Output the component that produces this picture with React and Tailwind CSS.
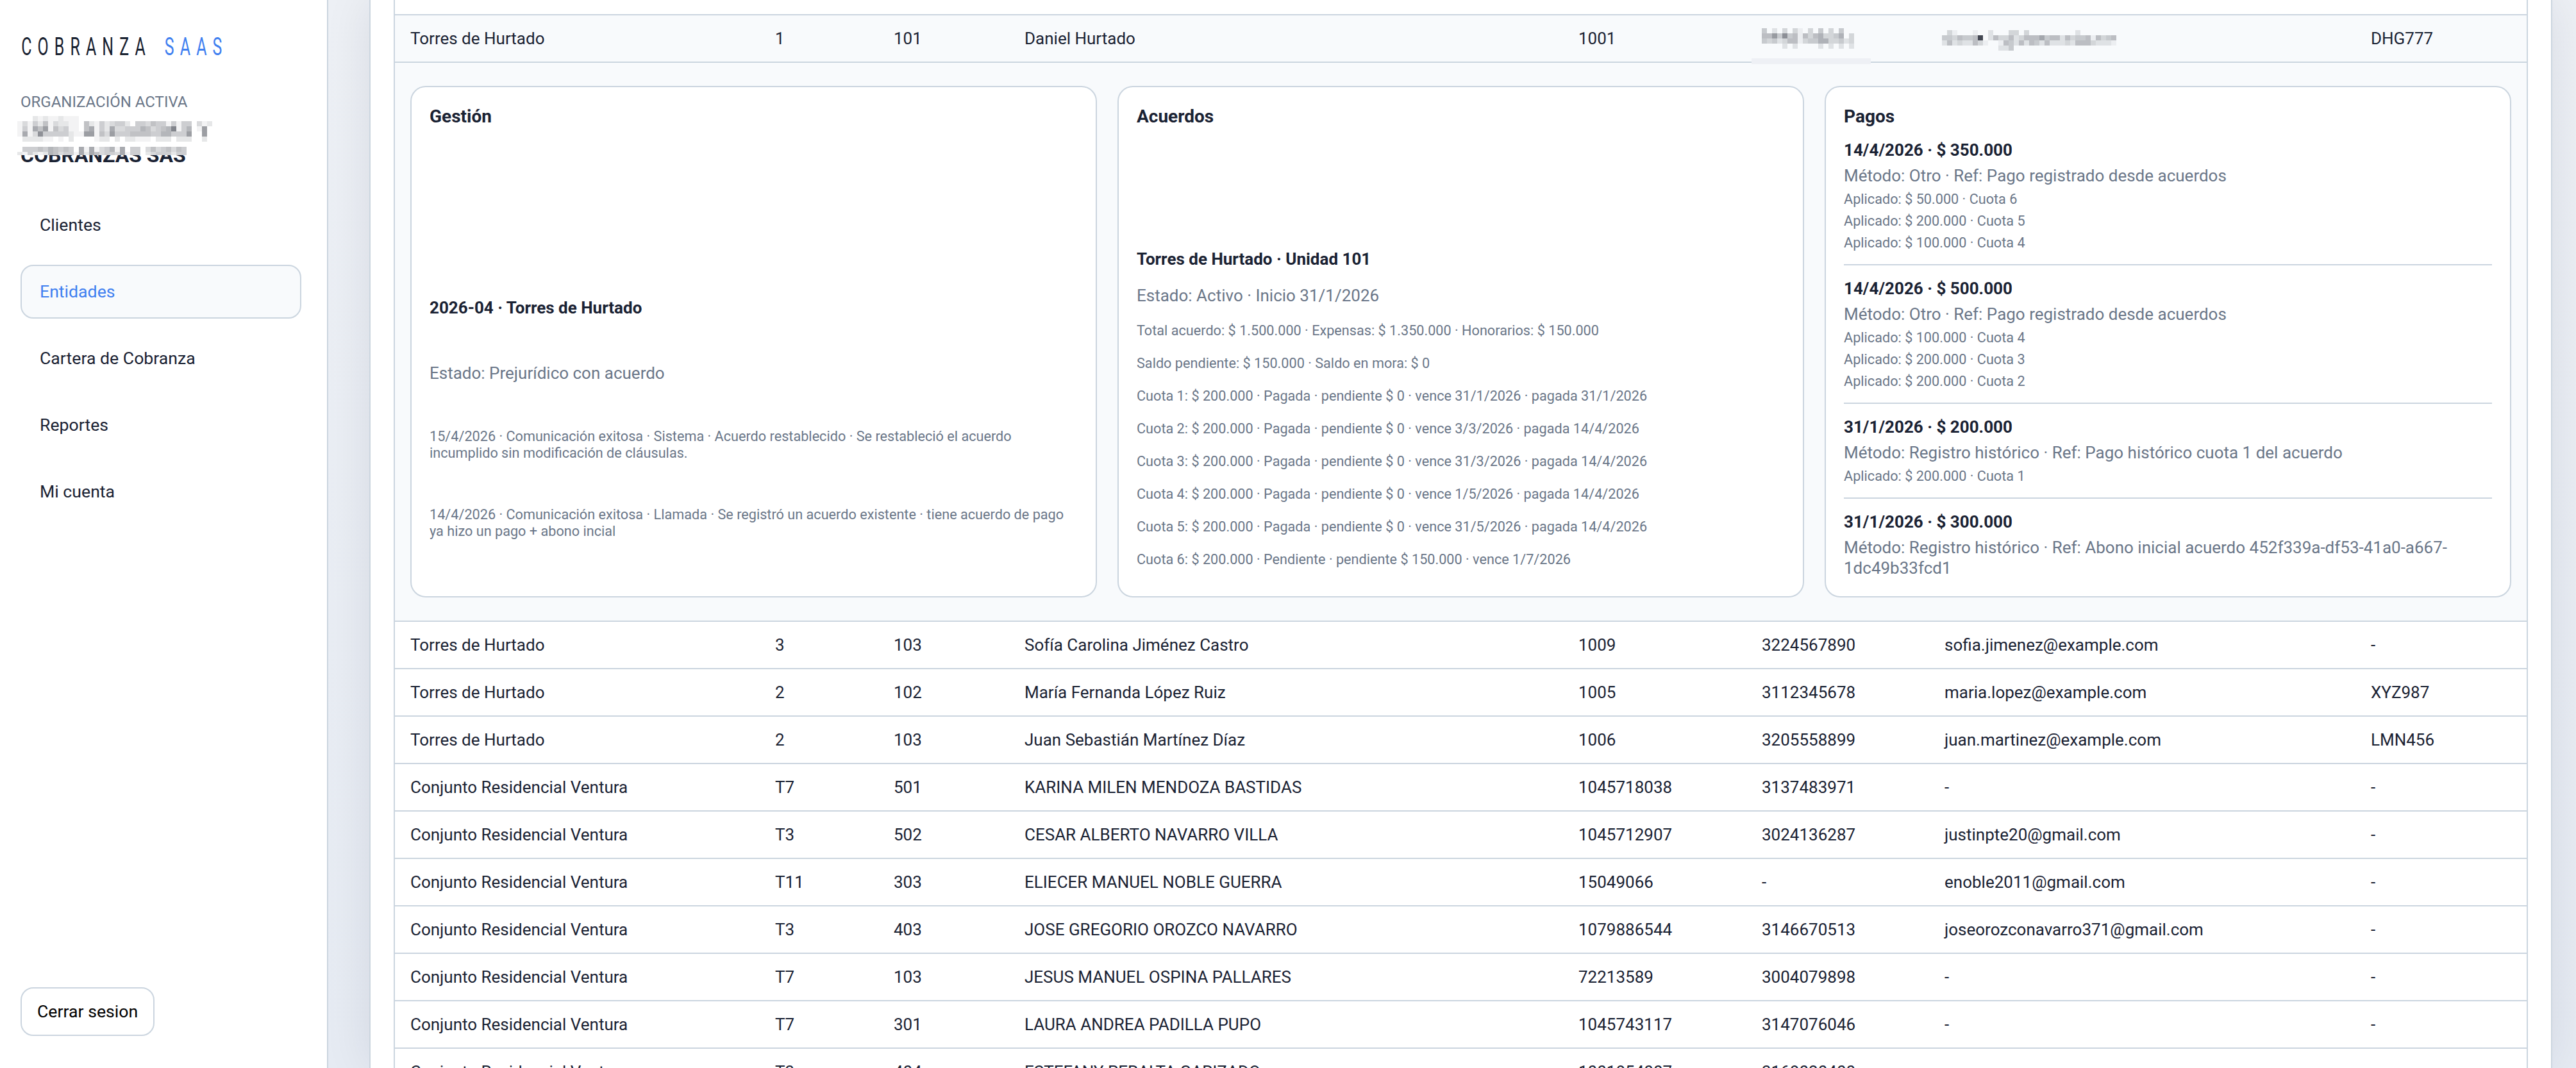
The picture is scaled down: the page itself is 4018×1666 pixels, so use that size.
const navItems = ["Clientes", "Entidades", "Cartera de Cobranza", "Reportes", "Mi cuenta"];

const cuotas = [
  "Cuota 1: $ 200.000 · Pagada · pendiente $ 0 · vence 31/1/2026 · pagada 31/1/2026",
  "Cuota 2: $ 200.000 · Pagada · pendiente $ 0 · vence 3/3/2026 · pagada 14/4/2026",
  "Cuota 3: $ 200.000 · Pagada · pendiente $ 0 · vence 31/3/2026 · pagada 14/4/2026",
  "Cuota 4: $ 200.000 · Pagada · pendiente $ 0 · vence 1/5/2026 · pagada 14/4/2026",
  "Cuota 5: $ 200.000 · Pagada · pendiente $ 0 · vence 31/5/2026 · pagada 14/4/2026",
  "Cuota 6: $ 200.000 · Pendiente · pendiente $ 150.000 · vence 1/7/2026",
];

const pagos = [
  {
    title: "14/4/2026 · $ 350.000",
    detail: "Método: Otro · Ref: Pago registrado desde acuerdos",
    aplicado: ["$ 50.000 · Cuota 6", "$ 200.000 · Cuota 5", "$ 100.000 · Cuota 4"],
  },
  {
    title: "14/4/2026 · $ 500.000",
    detail: "Método: Otro · Ref: Pago registrado desde acuerdos",
    aplicado: ["$ 100.000 · Cuota 4", "$ 200.000 · Cuota 3", "$ 200.000 · Cuota 2"],
  },
  {
    title: "31/1/2026 · $ 200.000",
    detail: "Método: Registro histórico · Ref: Pago histórico cuota 1 del acuerdo",
    aplicado: ["$ 200.000 · Cuota 1"],
  },
  {
    title: "31/1/2026 · $ 300.000",
    detail: "Método: Registro histórico · Ref: Abono inicial acuerdo 452f339a-df53-41a0-a667-1dc49b33fcd1",
    aplicado: [],
  },
];

const rows = [
  ["Torres de Hurtado", "3", "103", "Sofía Carolina Jiménez Castro", "1009", "3224567890", "sofia.jimenez@example.com", "-"],
  ["Torres de Hurtado", "2", "102", "María Fernanda López Ruiz", "1005", "3112345678", "maria.lopez@example.com", "XYZ987"],
  ["Torres de Hurtado", "2", "103", "Juan Sebastián Martínez Díaz", "1006", "3205558899", "juan.martinez@example.com", "LMN456"],
  ["Conjunto Residencial Ventura", "T7", "501", "KARINA MILEN MENDOZA BASTIDAS", "1045718038", "3137483971", "-", "-"],
  ["Conjunto Residencial Ventura", "T3", "502", "CESAR ALBERTO NAVARRO VILLA", "1045712907", "3024136287", "justinpte20@gmail.com", "-"],
  ["Conjunto Residencial Ventura", "T11", "303", "ELIECER MANUEL NOBLE GUERRA", "15049066", "-", "enoble2011@gmail.com", "-"],
  ["Conjunto Residencial Ventura", "T3", "403", "JOSE GREGORIO OROZCO NAVARRO", "1079886544", "3146670513", "joseorozconavarro371@gmail.com", "-"],
  ["Conjunto Residencial Ventura", "T7", "103", "JESUS MANUEL OSPINA PALLARES", "72213589", "3004079898", "-", "-"],
  ["Conjunto Residencial Ventura", "T7", "301", "LAURA ANDREA PADILLA PUPO", "1045743117", "3147076046", "-", "-"],
  ["Conjunto Residencial Ventura", "T3", "404", "ESTEFANY PERALTA GARIZADO", "1001854007", "3168020400", "-", "-"],
];

// Each hex digit is the darkness of one 8px block
const orgTop = [
  "00021211211100000000000000000000000000",
  "13142513221105214234420443544141440312",
  "141758153411057142733444653456a1460180",
  "17139444442118815384445555446644480080",
  "02222110102000012202022111022202220020",
];
const orgBottom = ["044454654540717134617044035345354", "214212653441727534437144023444244"];
const phoneMask = ["402030310304030400", "558494515356334603", "434235513446633423", "000020200002020202"];
const emailMask = [
  "0310001002000330300000000020000000",
  "4435445f02533523555745525344515345",
  "2523225310015425254252223255532221",
  "0000000000022400000000000000000000",
];

const Mosaic = ({ data, className }) => (
  <svg
    className={className}
    width={data[0].length * 8}
    height={data.length * 8}
    shapeRendering="crispEdges"
    aria-hidden="true"
  >
    {data.map((line, y) =>
      [...line].map((c, x) =>
        c === "0" ? null : (
          <rect
            key={`${x}-${y}`}
            x={x * 8}
            y={y * 8}
            width="8"
            height="8"
            fill="#1f2430"
            opacity={parseInt(c, 16) / 18}
          />
        )
      )
    )}
  </svg>
);

const Sidebar = () => (
  <aside className="flex w-[512px] shrink-0 flex-col border-r-2 border-[#cbd5df] bg-white pt-[49px] pr-10 pb-[50px] pl-8">
    <div className="h-12 origin-left scale-x-[0.64] pl-[2px] text-[39px] leading-[48px] tracking-[14.2px] whitespace-nowrap text-[#17202f]">
      COBRANZA <span className="ml-[9px] text-[#3f7ff0]">SAAS</span>
    </div>

    <div className="mt-12 text-2xl leading-7 text-[#6a7688]">ORGANIZACIÓN ACTIVA</div>
    <div className="relative mt-3 h-[76px] pt-[38px] text-[32px] leading-[38px] font-bold text-[#1a2233]">
      COBRANZAS SAS
      <Mosaic data={orgTop} className="absolute top-[-4px] -left-[5px]" />
      <div className="absolute top-[42px] -left-[5px] h-[15px] w-[270px] overflow-hidden bg-white">
        <Mosaic data={orgBottom} className="mt-[2px]" />
      </div>
    </div>

    <nav className="mt-12 flex flex-col gap-5">
      {navItems.map((item) => (
        <a
          key={item}
          className={
            item === "Entidades"
              ? "flex h-[84px] items-center rounded-[20px] border-2 border-[#cbd5df] bg-[#f8fafc] pl-7 text-[26.67px] text-[#3f7ff0]"
              : "flex h-[84px] items-center rounded-[20px] border-2 border-transparent pl-7 text-[26.67px] text-[#1a2233]"
          }
        >
          {item}
        </a>
      ))}
    </nav>

    <button className="mt-auto h-[76px] self-start rounded-[20px] border-2 border-[#cbd5df] bg-white px-6 text-[26.67px] text-black">
      Cerrar sesion
    </button>
  </aside>
);

const Row = ({ cells, className = "" }) => (
  <div
    className={`grid h-[74px] shrink-0 grid-cols-[569px_185px_204px_864px_286px_285px_665px_1fr] items-center border-b-2 border-[#cbd5df] pl-6 leading-8 ${className}`}
  >
    {cells.map((cell, i) => (
      <div key={i}>{cell}</div>
    ))}
  </div>
);

const Card = ({ title, children }) => (
  <section className="rounded-3xl border-2 border-[#cbd5df] bg-white p-7">
    <h4 className="pt-px text-[28px] leading-[33px] font-bold">{title}</h4>
    {children}
  </section>
);

const Detail = () => (
  <div className="grid h-[872px] shrink-0 grid-cols-3 gap-8 border-b-2 border-[#cbd5df] bg-[#f8fafc] px-6 py-9">
    <Card title="Gestión">
      <div className="mt-[266px] h-[102px] leading-8 font-bold">2026-04 · Torres de Hurtado</div>
      <div className="h-[102px] leading-8 text-[#6a7688]">Estado: Prejurídico con acuerdo</div>
      <div className="h-[122px] text-[21.67px] leading-[26px] text-[#6a7688]">
        15/4/2026 · Comunicación exitosa · Sistema · Acuerdo restablecido · Se restableció el acuerdo
        <br />
        incumplido sin modificación de cláusulas.
      </div>
      <div className="text-[21.67px] leading-[26px] text-[#6a7688]">
        14/4/2026 · Comunicación exitosa · Llamada · Se registró un acuerdo existente · tiene acuerdo de pago
        <br />
        ya hizo un pago + abono incial
      </div>
    </Card>

    <Card title="Acuerdos">
      <div className="mt-[190px] h-[57px] leading-8 font-bold">Torres de Hurtado · Unidad 101</div>
      <div className="h-[58px] leading-8 text-[#6a7688]">Estado: Activo · Inicio 31/1/2026</div>
      <div className="text-[21.67px] leading-[26px] text-[#6a7688]">
        <div className="h-[51px]">Total acuerdo: $ 1.500.000 · Expensas: $ 1.350.000 · Honorarios: $ 150.000</div>
        <div className="h-[51px]">Saldo pendiente: $ 150.000 · Saldo en mora: $ 0</div>
        {cuotas.map((c, i) => (
          <div key={c} className={i < cuotas.length - 1 ? "h-[51px]" : ""}>
            {c}
          </div>
        ))}
      </div>
    </Card>

    <Card title="Pagos">
      <div className="divide-y-2 divide-[#cbd5df]">
        {pagos.map((p) => (
          <div key={p.title} className="flex flex-col gap-2 py-5 last:pb-0">
            <div className="leading-8 font-bold">{p.title}</div>
            <div className="leading-8 text-[#6a7688]">{p.detail}</div>
            {p.aplicado.map((a) => (
              <div key={a} className="text-[21.67px] leading-[26px] text-[#6a7688]">
                Aplicado: {a}
              </div>
            ))}
          </div>
        ))}
      </div>
    </Card>
  </div>
);

export default function App() {
  return (
    <div className="flex h-[1666px] w-[4018px] overflow-hidden bg-linear-to-b from-[#edf0f5] to-[#e6ebf3] font-['Roboto',sans-serif]">
      <Sidebar />
      <main className="flex min-w-0 flex-1 overflow-hidden pr-[37px] pl-16">
        <div className="flex-1 border-x-2 border-[#cbd5df] bg-white px-9 shadow-[0_0_70px_rgba(15,23,42,0.09)]">
          <div className="flex h-full flex-col overflow-hidden border-x-2 border-[#cbd5df] text-[26px] text-[#1a2233]">
            <div className="h-6 shrink-0 border-b-2 border-[#cbd5df]"></div>
            <div className="relative shrink-0">
              <Row
                className="bg-[#f8fafc]"
                cells={[
                  "Torres de Hurtado",
                  "1",
                  "101",
                  "Daniel Hurtado",
                  "1001",
                  <Mosaic data={phoneMask} />,
                  <Mosaic data={emailMask} className="mt-[6px] -ml-[4px]" />,
                  "DHG777",
                ]}
              />
              <div className="absolute top-[67px] left-[2116px] z-10 h-[9px] w-[186px] bg-[#eef0f5]"></div>
            </div>
            <Detail />
            {rows.map((cells) => (
              <Row key={cells[3]} cells={cells} />
            ))}
          </div>
        </div>
      </main>
    </div>
  );
}
